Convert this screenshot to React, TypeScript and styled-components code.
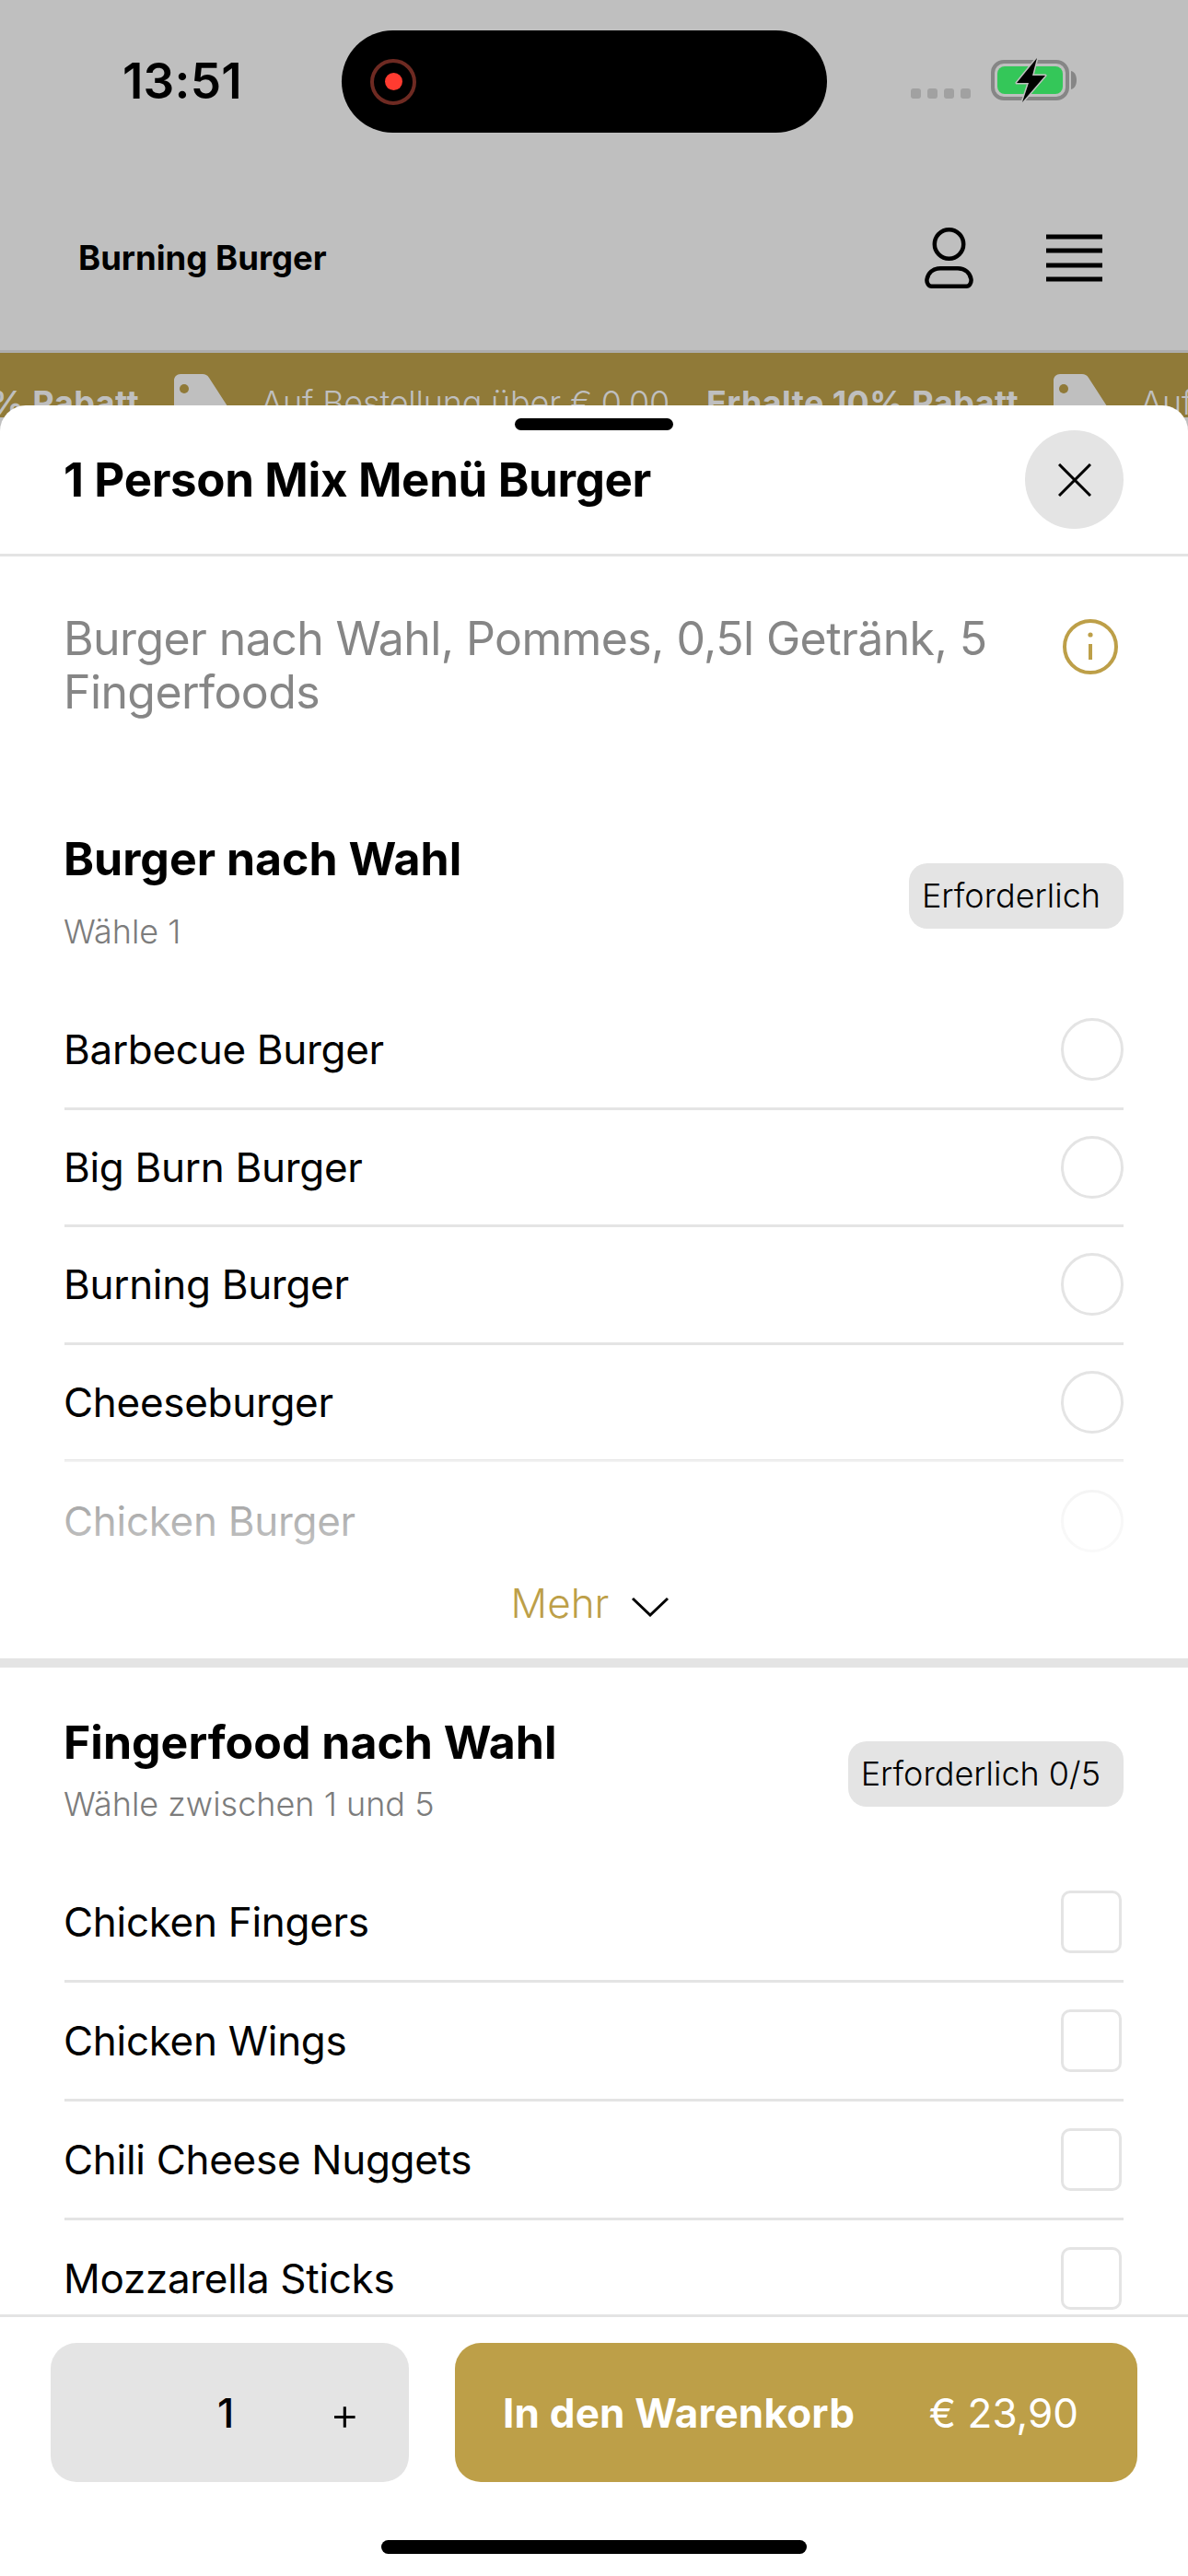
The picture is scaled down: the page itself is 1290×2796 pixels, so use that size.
import React from "react";
import styled, { createGlobalStyle } from "styled-components";

const Global = createGlobalStyle`
  html, body { margin: 0; padding: 0; background: #bfbfbf; }
  * { box-sizing: border-box; }
  body { font-family: Inter, "Noto Sans", sans-serif; color: #000; }
`;

const Page = styled.div`
  position: relative;
  width: 1290px;
  height: 2796px;
  overflow: hidden;
  background: #bfbfbf;
`;

const StatusBar = styled.div`
  display: flex;
  height: 178px;
  padding: 33px 0 0 133px;
`;
const Time = styled.div`
  width: 238px;
  height: 111px;
  line-height: 111px;
  font-size: 53px;
  font-weight: 600;
  letter-spacing: 0.2px;
`;
const Island = styled.div`
  width: 527px;
  height: 111px;
  border-radius: 56px;
  background: #000;
  display: flex;
  align-items: center;
  padding-left: 31px;
`;
const RecRing = styled.div`
  width: 50px;
  height: 50px;
  border-radius: 50%;
  border: 4px solid #6e2a22;
  display: flex;
  align-items: center;
  justify-content: center;
`;
const RecDot = styled.div`
  width: 19px;
  height: 19px;
  border-radius: 50%;
  background: #ff3b30;
`;
const StatusRight = styled.div`
  margin-left: 91px;
  display: flex;
  align-items: flex-start;
  padding-top: 30px;
`;
const Dots = styled.div`
  display: flex;
  gap: 7px;
  margin-top: 33px;
  margin-right: 22px;
`;
const Dot = styled.div`
  width: 11px;
  height: 11px;
  border-radius: 3px;
  background: #a1a1a1;
`;

const TopBar = styled.div`
  display: flex;
  align-items: center;
  height: 205px;
  padding: 2px 93px 0 85px;
  border-bottom: 3px solid #adadad;
`;
const Brand = styled.div`
  flex: 1;
  font-size: 36.5px;
  font-weight: 700;
`;
const UserIcon = styled.svg`
  width: 53px;
  height: 66px;
  margin-right: 79px;
`;
const MenuIcon = styled.svg`
  width: 61px;
  height: 56px;
`;

const Strip = styled.div`
  height: 70px;
  background: #907a38;
  overflow: hidden;
  display: flex;
  align-items: flex-start;
  white-space: nowrap;
  color: #bfbfbf;
  font-size: 36px;
  line-height: 44px;
  padding-top: 32px;
  margin-left: -188px;
  width: 1702px;
`;
const StripBold = styled.span<{ $first?: boolean }>`
  font-weight: 700;
  letter-spacing: 0.4px;
  width: 340px;
  flex: none;
  margin-left: ${(p) => (p.$first ? "0" : "44px")};
`;
const StripText = styled.span`
  font-weight: 300;
  letter-spacing: -0.2px;
  flex: none;
  width: 440px;
`;
const TagIcon = styled.svg`
  width: 62px;
  height: 70px;
  margin: -9px 32px 0 37px;
  flex: none;
`;

const Sheet = styled.div`
  position: absolute;
  top: 440px;
  left: 0;
  right: 0;
  bottom: 0;
  background: #fff;
  border-radius: 28px 28px 0 0;
  display: flex;
  flex-direction: column;
`;
const SheetHead = styled.div`
  height: 164px;
  flex: none;
  border-bottom: 3px solid #e4e4e4;
  padding-top: 14px;
`;
const Handle = styled.div`
  width: 172px;
  height: 13px;
  border-radius: 7px;
  background: #000;
  margin: 0 auto;
`;
const HeadRow = styled.div`
  display: flex;
  align-items: center;
  padding: 0 70px;
`;
const SheetTitle = styled.h1`
  flex: 1;
  margin: 0 0 0 -1px;
  font-size: 51px;
  font-weight: 700;
  letter-spacing: -0.35px;
`;
const CloseButton = styled.div`
  width: 107px;
  height: 107px;
  border-radius: 50%;
  background: #e4e4e4;
  display: flex;
  align-items: center;
  justify-content: center;
`;

const Body = styled.div`
  flex: 1;
  overflow: hidden;
`;
const DescRow = styled.div`
  display: flex;
  justify-content: space-between;
  padding: 60px 76px 0 69px;
`;
const Desc = styled.p`
  margin: 0;
  width: 1050px;
  font-size: 50px;
  line-height: 58px;
  font-weight: 400;
  letter-spacing: -0.6px;
  color: #868686;
`;
const InfoIcon = styled.svg`
  width: 60px;
  height: 60px;
  margin-top: 8px;
  flex: none;
`;

const Section = styled.section<{ $top: number }>`
  padding: ${(p) => p.$top}px 70px 0;
`;
const SectionHead = styled.div`
  display: flex;
  justify-content: space-between;
  align-items: flex-start;
`;
const SectionHeadText = styled.div`
  margin-left: -1px;
`;
const SectionTitle = styled.h2`
  margin: 0;
  font-size: 50px;
  line-height: 60px;
  font-weight: 700;
  letter-spacing: 0;
`;
const SectionSub = styled.div<{ $gap: number }>`
  margin-top: ${(p) => p.$gap}px;
  font-size: 36px;
  line-height: 40px;
  font-weight: 300;
  color: #7c7c7c;
`;
const Badge = styled.div<{ $top: number }>`
  margin-top: ${(p) => p.$top}px;
  height: 71px;
  padding: 0 25px 0 14px;
  border-radius: 20px;
  background: #e4e4e4;
  font-size: 36px;
  line-height: 71px;
  font-weight: 300;
  white-space: nowrap;
`;
const List = styled.div<{ $top: number }>`
  position: relative;
  margin-top: ${(p) => p.$top}px;
`;
const Row = styled.div<{ $h: number; $last?: boolean }>`
  height: ${(p) => p.$h}px;
  display: flex;
  align-items: center;
  justify-content: space-between;
  font-size: 44px;
  font-weight: 400;
  letter-spacing: -0.3px;
  border-bottom: ${(p) => (p.$last ? "0" : "3px solid #e4e4e4")};
`;
const RowLabel = styled.span`
  margin-left: -1px;
`;
const Radio = styled.div`
  width: 68px;
  height: 68px;
  border-radius: 50%;
  border: 3px solid #e4e4e4;
  flex: none;
`;
const Check = styled.div`
  width: 66px;
  height: 68px;
  margin-right: 2px;
  border-radius: 10px;
  border: 3px solid #e4e4e4;
  flex: none;
`;
const Fade = styled.div`
  position: absolute;
  left: 0;
  right: 0;
  bottom: 0;
  height: 130px;
  background: linear-gradient(rgba(255, 255, 255, 0.55), rgba(255, 255, 255, 0.85));
`;
const More = styled.div`
  height: 85px;
  display: flex;
  justify-content: center;
  align-items: flex-start;
  gap: 24px;
  padding-right: 8px;
  color: #bd9f48;
  font-size: 44px;
  line-height: 50px;
  font-weight: 300;
`;
const Chevron = styled.svg`
  width: 42px;
  height: 22px;
  margin-top: 18px;
`;
const ThickRule = styled.div`
  height: 10px;
  background: #e4e4e4;
`;

const Footer = styled.div`
  flex: none;
  height: 284px;
  background: #fff;
  border-top: 3px solid #e4e4e4;
  padding: 28px 55px 0;
`;
const FooterRow = styled.div`
  display: flex;
  gap: 50px;
`;
const Qty = styled.div`
  width: 389px;
  height: 151px;
  border-radius: 28px;
  background: #e4e4e4;
  display: flex;
  align-items: center;
  padding-left: 181px;
  font-size: 44px;
  font-weight: 500;
`;
const QtyNum = styled.span`
  width: 122px;
`;
const QtyPlus = styled.span`
  font-size: 50px;
  font-weight: 300;
  line-height: 50px;
  margin-top: 2px;
`;
const Cart = styled.div`
  flex: 1;
  height: 151px;
  border-radius: 28px;
  background: #bd9f48;
  color: #fff;
  display: flex;
  align-items: center;
  justify-content: space-between;
  padding: 0 64px 0 52px;
  font-size: 44px;
`;
const CartLabel = styled.span`
  font-weight: 700;
  letter-spacing: 0.2px;
`;
const CartPrice = styled.span`
  font-weight: 400;
`;
const HomeBar = styled.div`
  width: 462px;
  height: 15px;
  border-radius: 8px;
  background: #000;
  margin: 63px auto 0;
`;

const burgers = ["Barbecue Burger", "Big Burn Burger", "Burning Burger", "Cheeseburger", "Chicken Burger"];
const foods = ["Chicken Fingers", "Chicken Wings", "Chili Cheese Nuggets", "Mozzarella Sticks"];

const Tag = () => (
  <TagIcon viewBox="0 0 62 70">
    <path
      d="M7 0h24c3 0 5 1 7 4l22 34c2 3 2 6 0 9L38 68H8c-4 0-8-4-8-8V7C0 3 3 0 7 0z"
      fill="#bfbfbf"
    />
    <circle cx="11" cy="16" r="5" fill="#907a38" />
  </TagIcon>
);

export default function App() {
  return (
    <Page>
      <Global />
      <StatusBar>
        <Time>13:51</Time>
        <Island>
          <RecRing>
            <RecDot />
          </RecRing>
        </Island>
        <StatusRight>
          <Dots>
            <Dot />
            <Dot />
            <Dot />
            <Dot />
          </Dots>
          <svg width="94" height="48" viewBox="0 0 94 48">
            <rect x="2" y="4" width="81" height="40" rx="12" fill="none" stroke="#868686" strokeWidth="4" />
            <rect x="7" y="9" width="71" height="30" rx="8" fill="#34c759" />
            <path d="M87 14c4 1 6 5 6 10s-2 9-6 10z" fill="#868686" />
            <path
              d="M50 0 L28 27 L41 27 L34 48 L59 19 L45 19 Z"
              fill="#000"
              stroke="#bfbfbf"
              strokeWidth="3"
              strokeLinejoin="round"
              paintOrder="stroke"
            />
          </svg>
        </StatusRight>
      </StatusBar>
      <TopBar>
        <Brand>Burning Burger</Brand>
        <UserIcon viewBox="0 0 53 66" fill="none" stroke="#000" strokeWidth="4.5">
          <circle cx="26.5" cy="18" r="15.7" />
          <path d="M17 44.25h19c8 0 13.5 5 14.5 12 .5 4-2 7.5-5 7.5H7.5c-3 0-5.5-3.5-5-7.5 1-7 6.5-12 14.5-12z" />
        </UserIcon>
        <MenuIcon viewBox="0 0 61 56" fill="none" stroke="#000" strokeWidth="5">
          <path d="M0 5h61M0 20h61M0 36h61M0 51h61" />
        </MenuIcon>
      </TopBar>
      <Strip>
        <StripBold $first>Erhalte 10% Rabatt</StripBold>
        <Tag />
        <StripText>Auf Bestellung über € 0,00</StripText>
        <StripBold>Erhalte 10% Rabatt</StripBold>
        <Tag />
        <StripText>Auf Bestellung über € 0,00</StripText>
      </Strip>
      <Sheet>
        <SheetHead>
          <Handle />
          <HeadRow>
            <SheetTitle>1 Person Mix Menü Burger</SheetTitle>
            <CloseButton>
              <svg width="36" height="36" viewBox="0 0 36 36" fill="none" stroke="#000" strokeWidth="3">
                <path d="M1 1l34 34M35 1L1 35" />
              </svg>
            </CloseButton>
          </HeadRow>
        </SheetHead>
        <Body>
          <DescRow>
            <Desc>Burger nach Wahl, Pommes, 0,5l Getränk, 5 Fingerfoods</Desc>
            <InfoIcon viewBox="0 0 60 60" fill="none" stroke="#bd9f48" strokeWidth="4">
              <circle cx="30" cy="30" r="28" />
              <path d="M30 27v17" />
              <circle cx="30" cy="17" r="2.6" fill="#bd9f48" stroke="none" />
            </InfoIcon>
          </DescRow>
          <Section $top={122}>
            <SectionHead>
              <SectionHeadText>
                <SectionTitle>Burger nach Wahl</SectionTitle>
                <SectionSub $gap={29}>Wähle 1</SectionSub>
              </SectionHeadText>
              <Badge $top={35}>Erforderlich</Badge>
            </SectionHead>
            <List $top={46}>
              {burgers.map((b, i) => (
                <Row key={b} $h={127.5} $last={i === burgers.length - 1}>
                  <RowLabel>{b}</RowLabel>
                  <Radio />
                </Row>
              ))}
              <Fade />
            </List>
          </Section>
          <More>
            Mehr
            <Chevron viewBox="0 0 42 22" fill="none" stroke="#000" strokeWidth="3">
              <path d="M2 2l19 18L40 2" />
            </Chevron>
          </More>
          <ThickRule />
          <Section $top={51}>
            <SectionHead>
              <SectionHeadText>
                <SectionTitle>Fingerfood nach Wahl</SectionTitle>
                <SectionSub $gap={17}>Wähle zwischen 1 und 5</SectionSub>
              </SectionHeadText>
              <Badge $top={29}>Erforderlich 0/5</Badge>
            </SectionHead>
            <List $top={45}>
              {foods.map((f) => (
                <Row key={f} $h={129}>
                  <RowLabel>{f}</RowLabel>
                  <Check />
                </Row>
              ))}
            </List>
          </Section>
        </Body>
        <Footer>
          <FooterRow>
            <Qty>
              <QtyNum>1</QtyNum>
              <QtyPlus>+</QtyPlus>
            </Qty>
            <Cart>
              <CartLabel>In den Warenkorb</CartLabel>
              <CartPrice>€ 23,90</CartPrice>
            </Cart>
          </FooterRow>
          <HomeBar />
        </Footer>
      </Sheet>
    </Page>
  );
}
